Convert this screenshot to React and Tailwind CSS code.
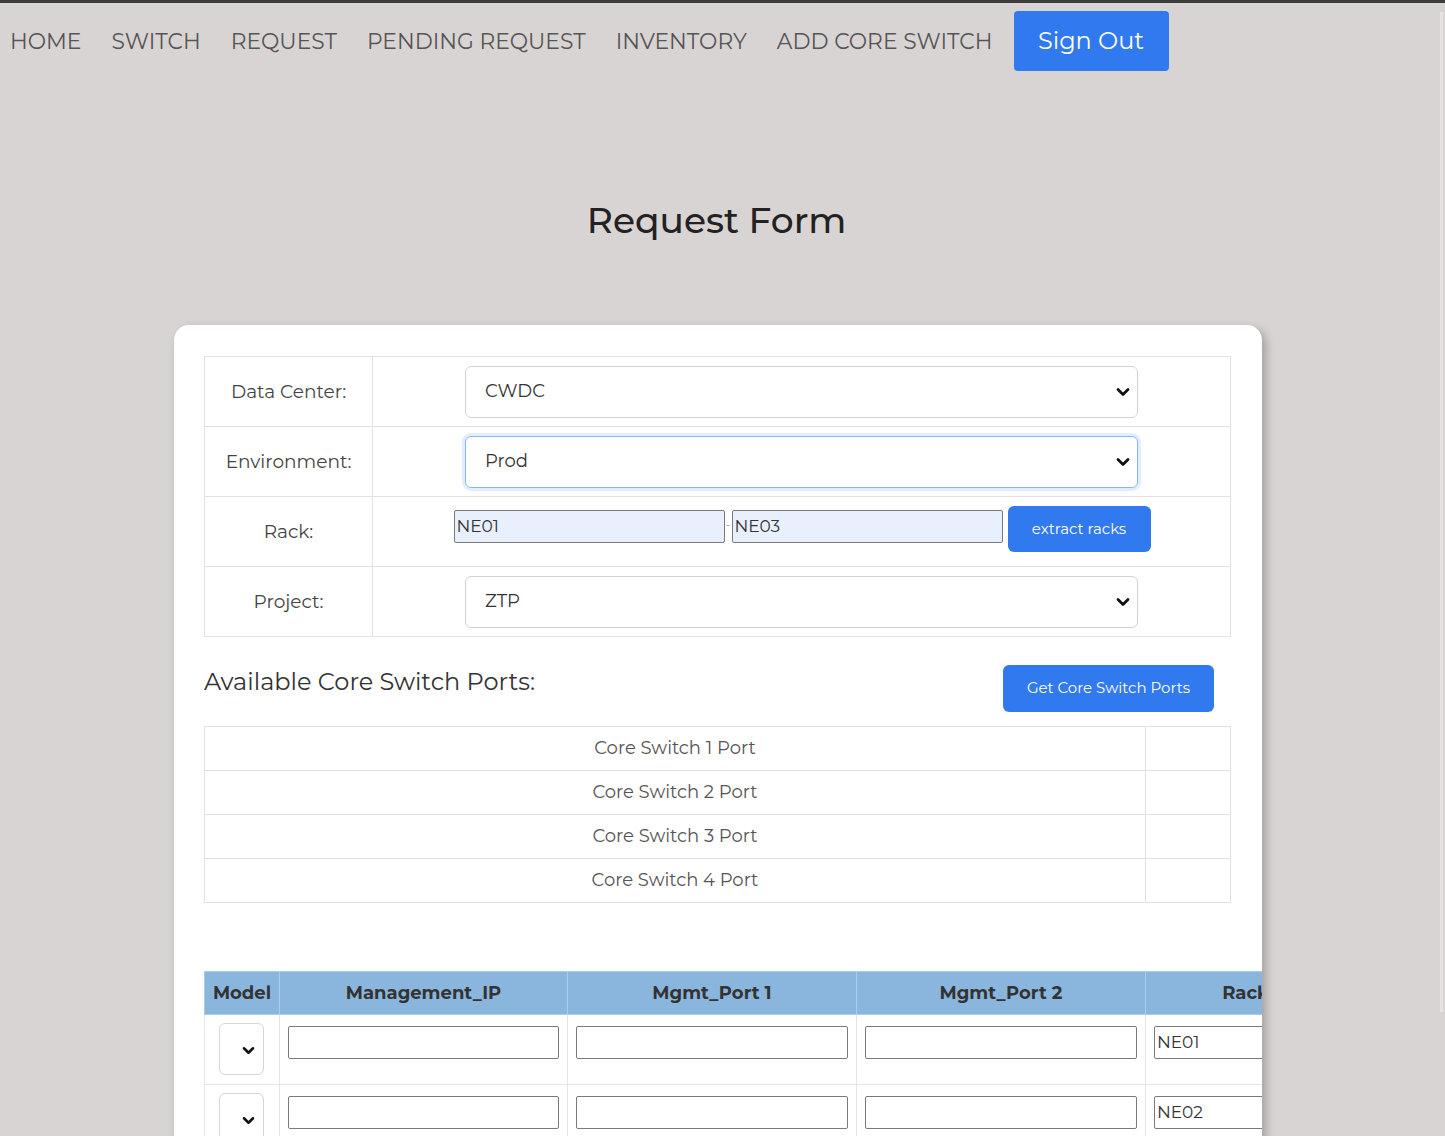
import React from "react";

function Chevron({ className = "" }) {
  return (
    <svg viewBox="0 0 14 10" className={className} fill="none">
      <path d="M2 2.5 L7 7.5 L12 2.5" stroke="#111" strokeWidth="2.8" strokeLinecap="round" strokeLinejoin="round" />
    </svg>
  );
}

function FakeSelect({ value, focused }) {
  return (
    <div
      className={
        "mx-auto flex h-[52px] w-[673px] items-center justify-between rounded-[6px] bg-white pl-[19px] pr-[7px] text-[18px] text-[#333] " +
        (focused
          ? "border border-[#86b7fe] shadow-[0_0_0_3px_rgba(13,110,253,0.12)]"
          : "border border-[#d2d2d2]")
      }
    >
      <span>{value}</span>
      <Chevron className="h-[10px] w-[14px]" />
    </div>
  );
}

function FormRow({ label, children, top }) {
  return (
    <tr className="h-[70px]">
      <td className="w-[168px] border border-[#e2e2e2] text-center text-[18.5px] text-[#444]">{label}</td>
      <td className={"border border-[#e2e2e2] " + (top ? "align-top pt-[9px]" : "")}>{children}</td>
    </tr>
  );
}

function CellInput({ value = "" }) {
  return (
    <div className="flex h-[33px] w-full items-center rounded-[2px] border border-[#7a7a7a] bg-white px-[2px] text-[17px] text-[#333]">
      {value}
    </div>
  );
}

function DataRow({ rack }) {
  return (
    <tr className="h-[70px]">
      <td className="border border-[#e6e6e6] px-[14px] align-top pt-[8px]">
        <div className="flex h-[52px] w-[45px] items-center justify-center rounded-[6px] border border-[#d6d6d6] pl-[14px] pt-[2px]">
          <Chevron className="h-[9px] w-[13px]" />
        </div>
      </td>
      <td className="border border-[#e6e6e6] px-[8px] align-top pt-[11px]"><CellInput /></td>
      <td className="border border-[#e6e6e6] px-[8px] align-top pt-[11px]"><CellInput /></td>
      <td className="border border-[#e6e6e6] px-[8px] align-top pt-[11px]"><CellInput /></td>
      <td className="border border-[#e6e6e6] px-[8px] align-top pt-[11px]"><CellInput value={rack} /></td>
    </tr>
  );
}

export default function App() {
  const navItems = ["HOME", "SWITCH", "REQUEST", "PENDING REQUEST", "INVENTORY", "ADD CORE SWITCH"];
  return (
    <div className="min-h-[1136px] bg-[#d9d4d4] font-['Montserrat','Open_Sans',sans-serif] border-t-[3px] border-[#3c3c3c] pb-[80px]">
      <div className="pointer-events-none fixed right-[2px] top-[12px] h-[1000px] w-[3px] bg-[#e6e2e2]" />
      <nav className="flex items-center pl-[10px] pt-[8px]">
        <div className="flex items-center gap-[30px] text-[21.8px] text-[#555]">
          {navItems.map((n) => (
            <span key={n}>{n}</span>
          ))}
        </div>
        <button className="ml-[21px] h-[60px] w-[155px] rounded-[4px] bg-[#3179ee] text-[24px] text-white">Sign Out</button>
      </nav>

      <h1 className="mt-[122px] pr-[12px] text-center text-[36px] font-medium text-[#222]">Request Form</h1>

      <div className="ml-[174px] mt-[78px] w-[1088px] overflow-hidden rounded-[15px] bg-white px-[30px] pt-[31px] pb-[60px] shadow-[4px_4px_10px_rgba(0,0,0,0.25)]">
        <table className="w-[1027px] border-collapse">
          <tbody>
            <FormRow label="Data Center:">
              <FakeSelect value="CWDC" />
            </FormRow>
            <FormRow label="Environment:">
              <FakeSelect value="Prod" focused />
            </FormRow>
            <FormRow label="Rack:" top>
              <div className="flex items-start justify-center pl-[1px]">
                <div className="mt-[4px] flex h-[33px] w-[271px] items-center rounded-[2px] border border-[#7a7a7a] bg-[#e8f0fe] px-[2px] text-[17px] text-[#333]">NE01</div>
                <span className="mt-[10px] w-[7px] text-center text-[12px] text-[#999]">-</span>
                <div className="mt-[4px] flex h-[33px] w-[271px] items-center rounded-[2px] border border-[#7a7a7a] bg-[#e8f0fe] px-[2px] text-[17px] text-[#333]">NE03</div>
                <button className="ml-[5px] h-[46px] w-[143px] rounded-[6px] bg-[#3179ee] text-[15px] text-white">extract racks</button>
              </div>
            </FormRow>
            <FormRow label="Project:">
              <FakeSelect value="ZTP" />
            </FormRow>
          </tbody>
        </table>

        <div className="mt-[28px] flex items-start justify-between pr-[18px]">
          <h2 className="mt-[1px] text-[24px] leading-[32px] text-[#333]">Available Core Switch Ports:</h2>
          <button className="h-[47px] w-[211px] rounded-[6px] bg-[#3179ee] text-[15px] text-white">Get Core Switch Ports</button>
        </div>

        <table className="mt-[14px] w-[1027px] border-collapse">
          <tbody>
            {[1, 2, 3, 4].map((i) => (
              <tr key={i} className="h-[44px]">
                <td className="border border-[#e2e2e2] text-center text-[18px] text-[#555]">Core Switch {i} Port</td>
                <td className="w-[85px] border border-[#e2e2e2]"></td>
              </tr>
            ))}
          </tbody>
        </table>

        <table className="mt-[68px] w-[1141px] table-fixed border-collapse">
          <colgroup>
            <col className="w-[75px]" />
            <col className="w-[288px]" />
            <col className="w-[289px]" />
            <col className="w-[289px]" />
            <col className="w-[200px]" />
          </colgroup>
          <thead>
            <tr className="h-[43px] bg-[#8ab6de] text-[18px] font-bold text-[#333]">
              <th className="border border-[#a9cdea]">Model</th>
              <th className="border border-[#a9cdea]">Management_IP</th>
              <th className="border border-[#a9cdea]">Mgmt_Port 1</th>
              <th className="border border-[#a9cdea]">Mgmt_Port 2</th>
              <th className="border border-[#a9cdea]">Rack</th>
            </tr>
          </thead>
          <tbody>
            <DataRow rack="NE01" />
            <DataRow rack="NE02" />
            <DataRow rack="NE03" />
          </tbody>
        </table>
      </div>
    </div>
  );
}
